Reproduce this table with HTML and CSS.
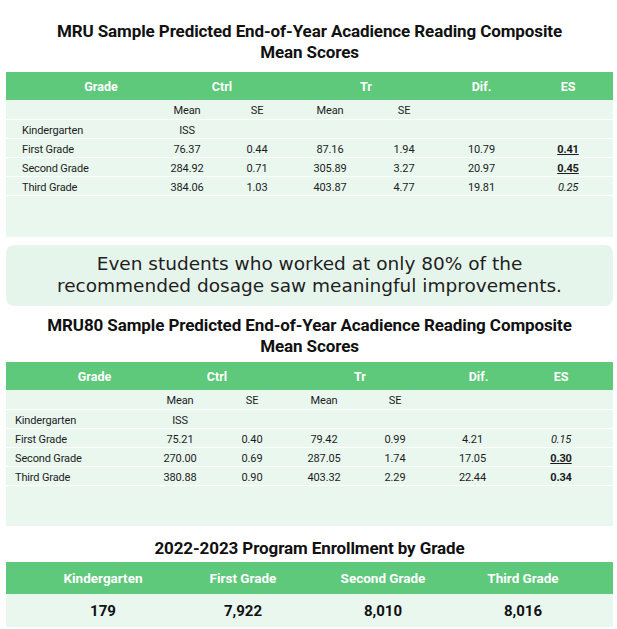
FILE: index.html
```html
<!DOCTYPE html>
<html>
<head>
<meta charset="utf-8">
<link rel="stylesheet" href="styles.css">
</head>
<body>
<div class="page">
  <h2 class="title t1">MRU Sample Predicted End-of-Year Acadience Reading Composite<br>Mean Scores</h2>
  <div class="table tA">
    <div class="row head">
      <div class="c-grade">Grade</div>
      <div class="span2">Ctrl</div>
      <div class="span2">Tr</div>
      <div>Dif.</div>
      <div>ES</div>
    </div>
    <div class="row sub">
      <div></div><div>Mean</div><div>SE</div><div>Mean</div><div>SE</div><div></div><div></div>
    </div>
    <div class="row line">
      <div class="lbl">Kindergarten</div><div>ISS</div><div></div><div></div><div></div><div></div><div></div>
    </div>
    <div class="row line">
      <div class="lbl">First Grade</div><div>76.37</div><div>0.44</div><div>87.16</div><div>1.94</div><div>10.79</div><div><b class="u">0.41</b></div>
    </div>
    <div class="row line">
      <div class="lbl">Second Grade</div><div>284.92</div><div>0.71</div><div>305.89</div><div>3.27</div><div>20.97</div><div><b class="u">0.45</b></div>
    </div>
    <div class="row line">
      <div class="lbl">Third Grade</div><div>384.06</div><div>1.03</div><div>403.87</div><div>4.77</div><div>19.81</div><div><i>0.25</i></div>
    </div>
    <div class="filler"></div>
  </div>

  <div class="callout">
    <p class="cl">Even students who worked at only 80% of the</p>
    <p class="cl">recommended dosage saw meaningful improvements.</p>
  </div>

  <h2 class="title t2">MRU80 Sample Predicted End-of-Year Acadience Reading Composite<br>Mean Scores</h2>
  <div class="table tB">
    <div class="row head">
      <div class="c-grade">Grade</div>
      <div class="span2">Ctrl</div>
      <div class="span2">Tr</div>
      <div class="c-dif">Dif.</div>
      <div>ES</div>
    </div>
    <div class="row sub">
      <div></div><div>Mean</div><div>SE</div><div>Mean</div><div>SE</div><div></div><div></div>
    </div>
    <div class="row line">
      <div class="lbl">Kindergarten</div><div>ISS</div><div></div><div></div><div></div><div></div><div></div>
    </div>
    <div class="row line">
      <div class="lbl">First Grade</div><div>75.21</div><div>0.40</div><div>79.42</div><div>0.99</div><div>4.21</div><div><i>0.15</i></div>
    </div>
    <div class="row line">
      <div class="lbl">Second Grade</div><div>270.00</div><div>0.69</div><div>287.05</div><div>1.74</div><div>17.05</div><div><b class="u">0.30</b></div>
    </div>
    <div class="row line">
      <div class="lbl">Third Grade</div><div>380.88</div><div>0.90</div><div>403.32</div><div>2.29</div><div>22.44</div><div><b>0.34</b></div>
    </div>
    <div class="filler"></div>
  </div>

  <h2 class="title t3">2022-2023 Program Enrollment by Grade</h2>
  <div class="enroll">
    <div class="erow ehead">
      <div>Kindergarten</div><div>First Grade</div><div>Second Grade</div><div>Third Grade</div>
    </div>
    <div class="erow evals">
      <div>179</div><div>7,922</div><div>8,010</div><div>8,016</div>
    </div>
  </div>
</div>
</body>
</html>
```

FILE: styles.css
```css
* { box-sizing: border-box; }
html, body { margin: 0; padding: 0; background: #ffffff; }
body { font-family: Roboto, "Liberation Sans", sans-serif; color: #1d1d1d; }
.page { width: 617px; padding: 0 4px 0 6px; }

.title {
  margin: 0;
  text-align: center;
  font-family: Roboto, "Liberation Sans", sans-serif;
  font-weight: 700;
  font-size: 17px;
  line-height: 21px;
  color: #111;
  letter-spacing: -0.1px;
}
.t1 { padding-top: 21px; height: 72px; }
.t2 { height: 56px; padding-top: 9px; }
.t3 { height: 36px; padding-top: 12px; }

.table { background: #e9f7ef; width: 607px; }
.row { display: grid; align-items: center; text-align: center; font-size: 11px; letter-spacing: -0.15px; }
.tA .row { grid-template-columns: 146px 70px 70px 76px 72px 83px 90px; }
.tB .row { grid-template-columns: 139px 70px 74px 70px 72px 83px 94px; }
.head {
  background: #5ec87b;
  color: #fff;
  font-weight: 700;
  font-size: 12.5px;
  letter-spacing: 0;
  height: 28px;
}
.head .span2 { grid-column: span 2; }
.tA .head .c-grade { padding-left: 44px; }
.tB .head .c-grade { padding-left: 38px; }
.tB .head .c-dif { padding-left: 12px; }
.sub { height: 19px; padding-top: 1px; }
.line { height: 19px; border-top: 1px solid #ffffff; padding-top: 2px; }
.lbl { text-align: left; }
.tA .lbl { padding-left: 16px; }
.tB .lbl { padding-left: 9px; }
.tA .filler { height: 42px; border-top: 1px solid #ffffff; }
.tB .filler { height: 41px; border-top: 1px solid #ffffff; }
.u { text-decoration: underline; }
b { font-weight: 700; }

.callout {
  margin-top: 8px;
  width: 607px;
  height: 61px;
  background: #e6f5ec;
  border-radius: 8px;
  text-align: center;
  font-family: "DejaVu Sans", "Open Sans", sans-serif;
  font-size: 18.5px;
  padding-top: 8px;
  color: #1e1e1e;
}
.cl { margin: 0; height: 22px; line-height: 22px; white-space: nowrap; }

.enroll { width: 607px; background: #e9f7ef; }
.erow { display: grid; grid-template-columns: repeat(4, 140px); padding-left: 27px; text-align: center; align-items: center; }
.ehead { background: #5ec87b; color: #fff; font-weight: 700; font-size: 13.5px; height: 32px; }
.evals { height: 33px; font-weight: 700; font-size: 15px; color: #111; }
```
